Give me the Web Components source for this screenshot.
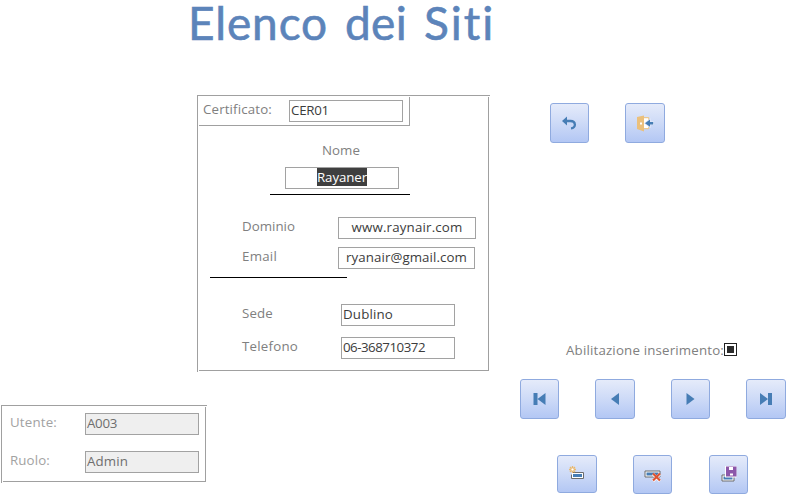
<!DOCTYPE html>
<html lang="it">
<head>
<meta charset="utf-8">
<title>Elenco dei Siti</title>
<style>
html,body{margin:0;background:#fff;overflow:hidden}
body{font:13.3px/18px "Open Sans","Noto Sans",sans-serif;color:#808080}
</style>
</head>
<body>
<sites-page></sites-page>
<script>
// Text whose tracking is adjusted so that it fills a given width.
class FitText extends HTMLElement {
  connectedCallback() {
    const r = this.attachShadow({mode:'open'});
    r.innerHTML = `<style>:host{display:block;white-space:pre;flex:none}span{display:inline-block}</style><span></span>`;
    const s = r.querySelector('span');
    s.textContent = this.getAttribute('text');
    const w = +this.getAttribute('w');
    this.style.width = w + 'px';
    const n = s.textContent.length;
    s.style.letterSpacing = ((w - s.getBoundingClientRect().width) / n) + 'px';
  }
}
customElements.define('fit-text', FitText);

class TextField extends HTMLElement {
  connectedCallback() {
    const a = k => this.getAttribute(k);
    this.attachShadow({mode:'open'}).innerHTML = `<style>
      :host{display:flex;box-sizing:border-box;flex:none;height:22px;border:1px solid #a2a2a2;padding:0 1px;color:#3c3c3c;background:#fff}
      :host([center]){justify-content:center}
      :host([disabled]){background:#efefef;color:#6e6e6e}
      fit-text{height:18px}
      :host([selected]) fit-text{background:#3f3f3f;color:#fff}
    </style><fit-text text="${a('value')}" w="${a('tw')}"></fit-text>`;
    this.style.width = a('w') + 'px';
  }
}
customElements.define('text-field', TextField);

// Etched frame: its corners are left open at top right and bottom left.
class EtchedPanel extends HTMLElement {
  connectedCallback() {
    this.attachShadow({mode:'open'}).innerHTML = `<style>
      :host{display:block;box-sizing:border-box;--l:linear-gradient(#a0a0a0,#a0a0a0);
      background:var(--l) 0 0/100% 1px no-repeat,var(--l) 0 0/1px 100% no-repeat,
      var(--l) calc(100% - 1px) 2px/1px calc(100% - 3px) no-repeat,
      var(--l) 2px calc(100% - 1px)/calc(100% - 3px) 1px no-repeat;}
    </style><slot></slot>`;
  }
}
customElements.define('etched-panel', EtchedPanel);

const ICONS = {
  undo:`<path d="M1 6 6 1.5v9z"/><path d="M3 6H9.5C15 6 15.5 13 10 13.3" fill="none" stroke="#467db5" stroke-width="2.3"/>`,
  exit:`<path d="M7 2.7h5.8v11H7z" fill="#fff" stroke="#ebc07c"/><path d="M1 2 8 .5v16L1 14z" fill="#ebc07c"/><path d="M4 7.5h2v2H4z" fill="#fff"/><path d="M8 4h4v8H8z" fill="#fff"/><path d="m9 8.2 5-3.7v2.4h3.2v2.5H14v2.4z" stroke="#dfe7f9" stroke-width="1.4" paint-order="stroke"/>`,
  first:`<path d="M2.5 2h4v12h-4zM14.5 2v12l-8-6z"/>`,
  prev:`<path d="M13 2v12L5 8z"/>`,
  next:`<path d="m4.5 2 8 6-8 6z"/>`,
  last:`<path d="m3 2 8 6-8 6zM11 2h4v12h-4z"/>`,
  add:`<path d="M4.5 6.5h11v6h-12v-4" fill="#fff" stroke="#6c6c6c"/><path d="M5 8h9v3H5z"/><path d="M4.5 0v2.2M4.5 4.8V7M1 3.5h2.2M5.8 3.5H8M2 1l1.6 1.6M5.4 4.4 7 6M7 1 5.4 2.6M3.6 4.4 2 6" stroke="#ebb96c" stroke-width="1.3"/><circle cx="4.5" cy="3.5" r="1.5" fill="#fff" stroke="#ebb96c" stroke-width=".8"/>`,
  del:`<path d="M1 4h15v6H1z" fill="#fff" stroke="#6c6c6c"/><path d="M2.5 5.5h12v3h-12z"/><path d="m9 7 7 7m0-7-7 7" stroke="#fff" stroke-width="3"/><path d="m9 6.5 7 7m0-7-7 7" stroke="#dc5432" stroke-width="2.2"/>`,
  save:`<path d="M2 8h12v6H2z" fill="#fff" stroke="#6c6c6c"/><path d="M3.5 9.5h9v3h-9z"/><path d="M5-1h11.5v11.5H5z" fill="#fff"/><path d="M6-.5h10.5v10H6z" fill="#8c57aa"/><path d="M9 0h4v3H9zM10 6.5h3v2h-3z" fill="#fff"/>`
};
class IconButton extends HTMLElement {
  connectedCallback() {
    const a = k => this.getAttribute(k);
    this.attachShadow({mode:'open'}).innerHTML = `<style>
      :host{display:flex;align-items:center;justify-content:center;flex:none;box-sizing:border-box;height:40px;border:1px solid #8faadf;border-radius:3px;background:linear-gradient(#e5ebfa,#cddaf7 50%,#b3c7f4)}
      svg{display:block;flex:none;overflow:visible}
    </style><svg width="18" height="16" viewBox="0 0 18 16" fill="#467db5">${ICONS[a('icon')]}</svg>`;
    this.style.width = a('w') + 'px';
    if (a('h')) this.style.height = a('h') + 'px';
  }
}
customElements.define('icon-button', IconButton);

class SitesPage extends HTMLElement {
  connectedCallback() {
    this.attachShadow({mode:'open'}).innerHTML = `<style>
      :host{display:grid;grid-template-columns:520px 269px;height:499px;background:#fff}
      .row{display:flex}
      .title{height:95px;padding-left:188px;font-family:Lato,sans-serif;font-size:46px;line-height:45px;color:#5c84ba;box-sizing:border-box}
      .title fit-text{-webkit-text-stroke:.6px #5c84ba}
      .form{width:293px;height:277px;margin-left:197px}
      .cert{--c:linear-gradient(#a0a0a0,#a0a0a0);box-sizing:border-box;width:213px;height:31px;padding:5px 6px 0;align-items:flex-start;background:var(--c) 212px 2px/1px 29px no-repeat,var(--c) 2px 30px/211px 1px no-repeat}
      .line{height:1px;background:#000}
      .user{width:206px;height:78px;margin:33px 0 0 1px;padding:8px 0 0 9px;color:#a2a2a2}
      .check{box-sizing:border-box;width:13px;height:13px;border:1px solid #222;padding:2px;background:#2c2c2c content-box}
    </style>
    <div>
      <div class="row title"><fit-text text="Elenco" w="140"></fit-text><fit-text text="dei" w="62" style="margin-left:17px"></fit-text><fit-text text="Siti" w="72" style="margin-left:17px"></fit-text></div>
      <etched-panel class="form">
        <div class="row cert"><fit-text text="Certificato:" w="69"></fit-text><text-field value="CER01" tw="38" w="114" style="margin-left:17px"></text-field></div>
        <div class="row" style="margin:15px 0 0 125px"><fit-text text="Nome" w="38"></fit-text></div>
        <div class="row" style="margin:8px 0 0 88px"><text-field value="Rayaner" tw="50" w="114" center selected></text-field></div>
        <div class="line" style="width:140px;margin:5px 0 0 73px"></div>
        <div class="row" style="margin:22px 0 0 45px"><fit-text text="Dominio" w="53"></fit-text><text-field value="www.raynair.com" tw="111" w="138" center style="margin-left:43px"></text-field></div>
        <div class="row" style="margin:8px 0 0 45px"><fit-text text="Email" w="35"></fit-text><text-field value="ryanair@gmail.com" tw="121" w="137" center style="margin-left:61px"></text-field></div>
        <div class="line" style="width:137px;margin:8px 0 0 13px"></div>
        <div class="row" style="margin:26px 0 0 45px"><fit-text text="Sede" w="31"></fit-text><text-field value="Dublino" tw="50" w="114" style="margin-left:68px"></text-field></div>
        <div class="row" style="margin:11px 0 0 45px"><fit-text text="Telefono" w="56"></fit-text><text-field value="06-368710372" tw="82" w="114" style="margin-left:43px"></text-field></div>
      </etched-panel>
      <etched-panel class="user">
        <div class="row"><fit-text text="Utente:" w="47"></fit-text><text-field value="A003" tw="30" w="114" disabled style="margin-left:28px"></text-field></div>
        <div class="row" style="margin-top:16px"><fit-text text="Ruolo:" w="40"></fit-text><text-field value="Admin" tw="41" w="114" disabled style="margin-left:35px"></text-field></div>
      </etched-panel>
    </div>
    <div>
      <div class="row" style="margin:103px 0 0 30px;gap:36px"><icon-button icon="undo" w="39"></icon-button><icon-button icon="exit" w="40"></icon-button></div>
      <div class="row" style="margin:198px 0 0 46px;height:38px"><fit-text text="Abilitazione inserimento:" w="158"></fit-text><div class="check" style="margin-top:2px"></div></div>
      <div class="row" style="gap:36px"><icon-button icon="first" w="39"></icon-button><icon-button icon="prev" w="40"></icon-button><icon-button icon="next" w="39"></icon-button><icon-button icon="last" w="40"></icon-button></div>
      <div class="row" style="gap:36px;margin:36px 0 0 37px"><icon-button icon="add" w="40" h="38"></icon-button><icon-button icon="del" w="39" h="39"></icon-button><icon-button icon="save" w="39" h="39" style="margin-left:1px"></icon-button></div>
    </div>`;
  }
}
customElements.define('sites-page', SitesPage);
</script>
</body>
</html>
